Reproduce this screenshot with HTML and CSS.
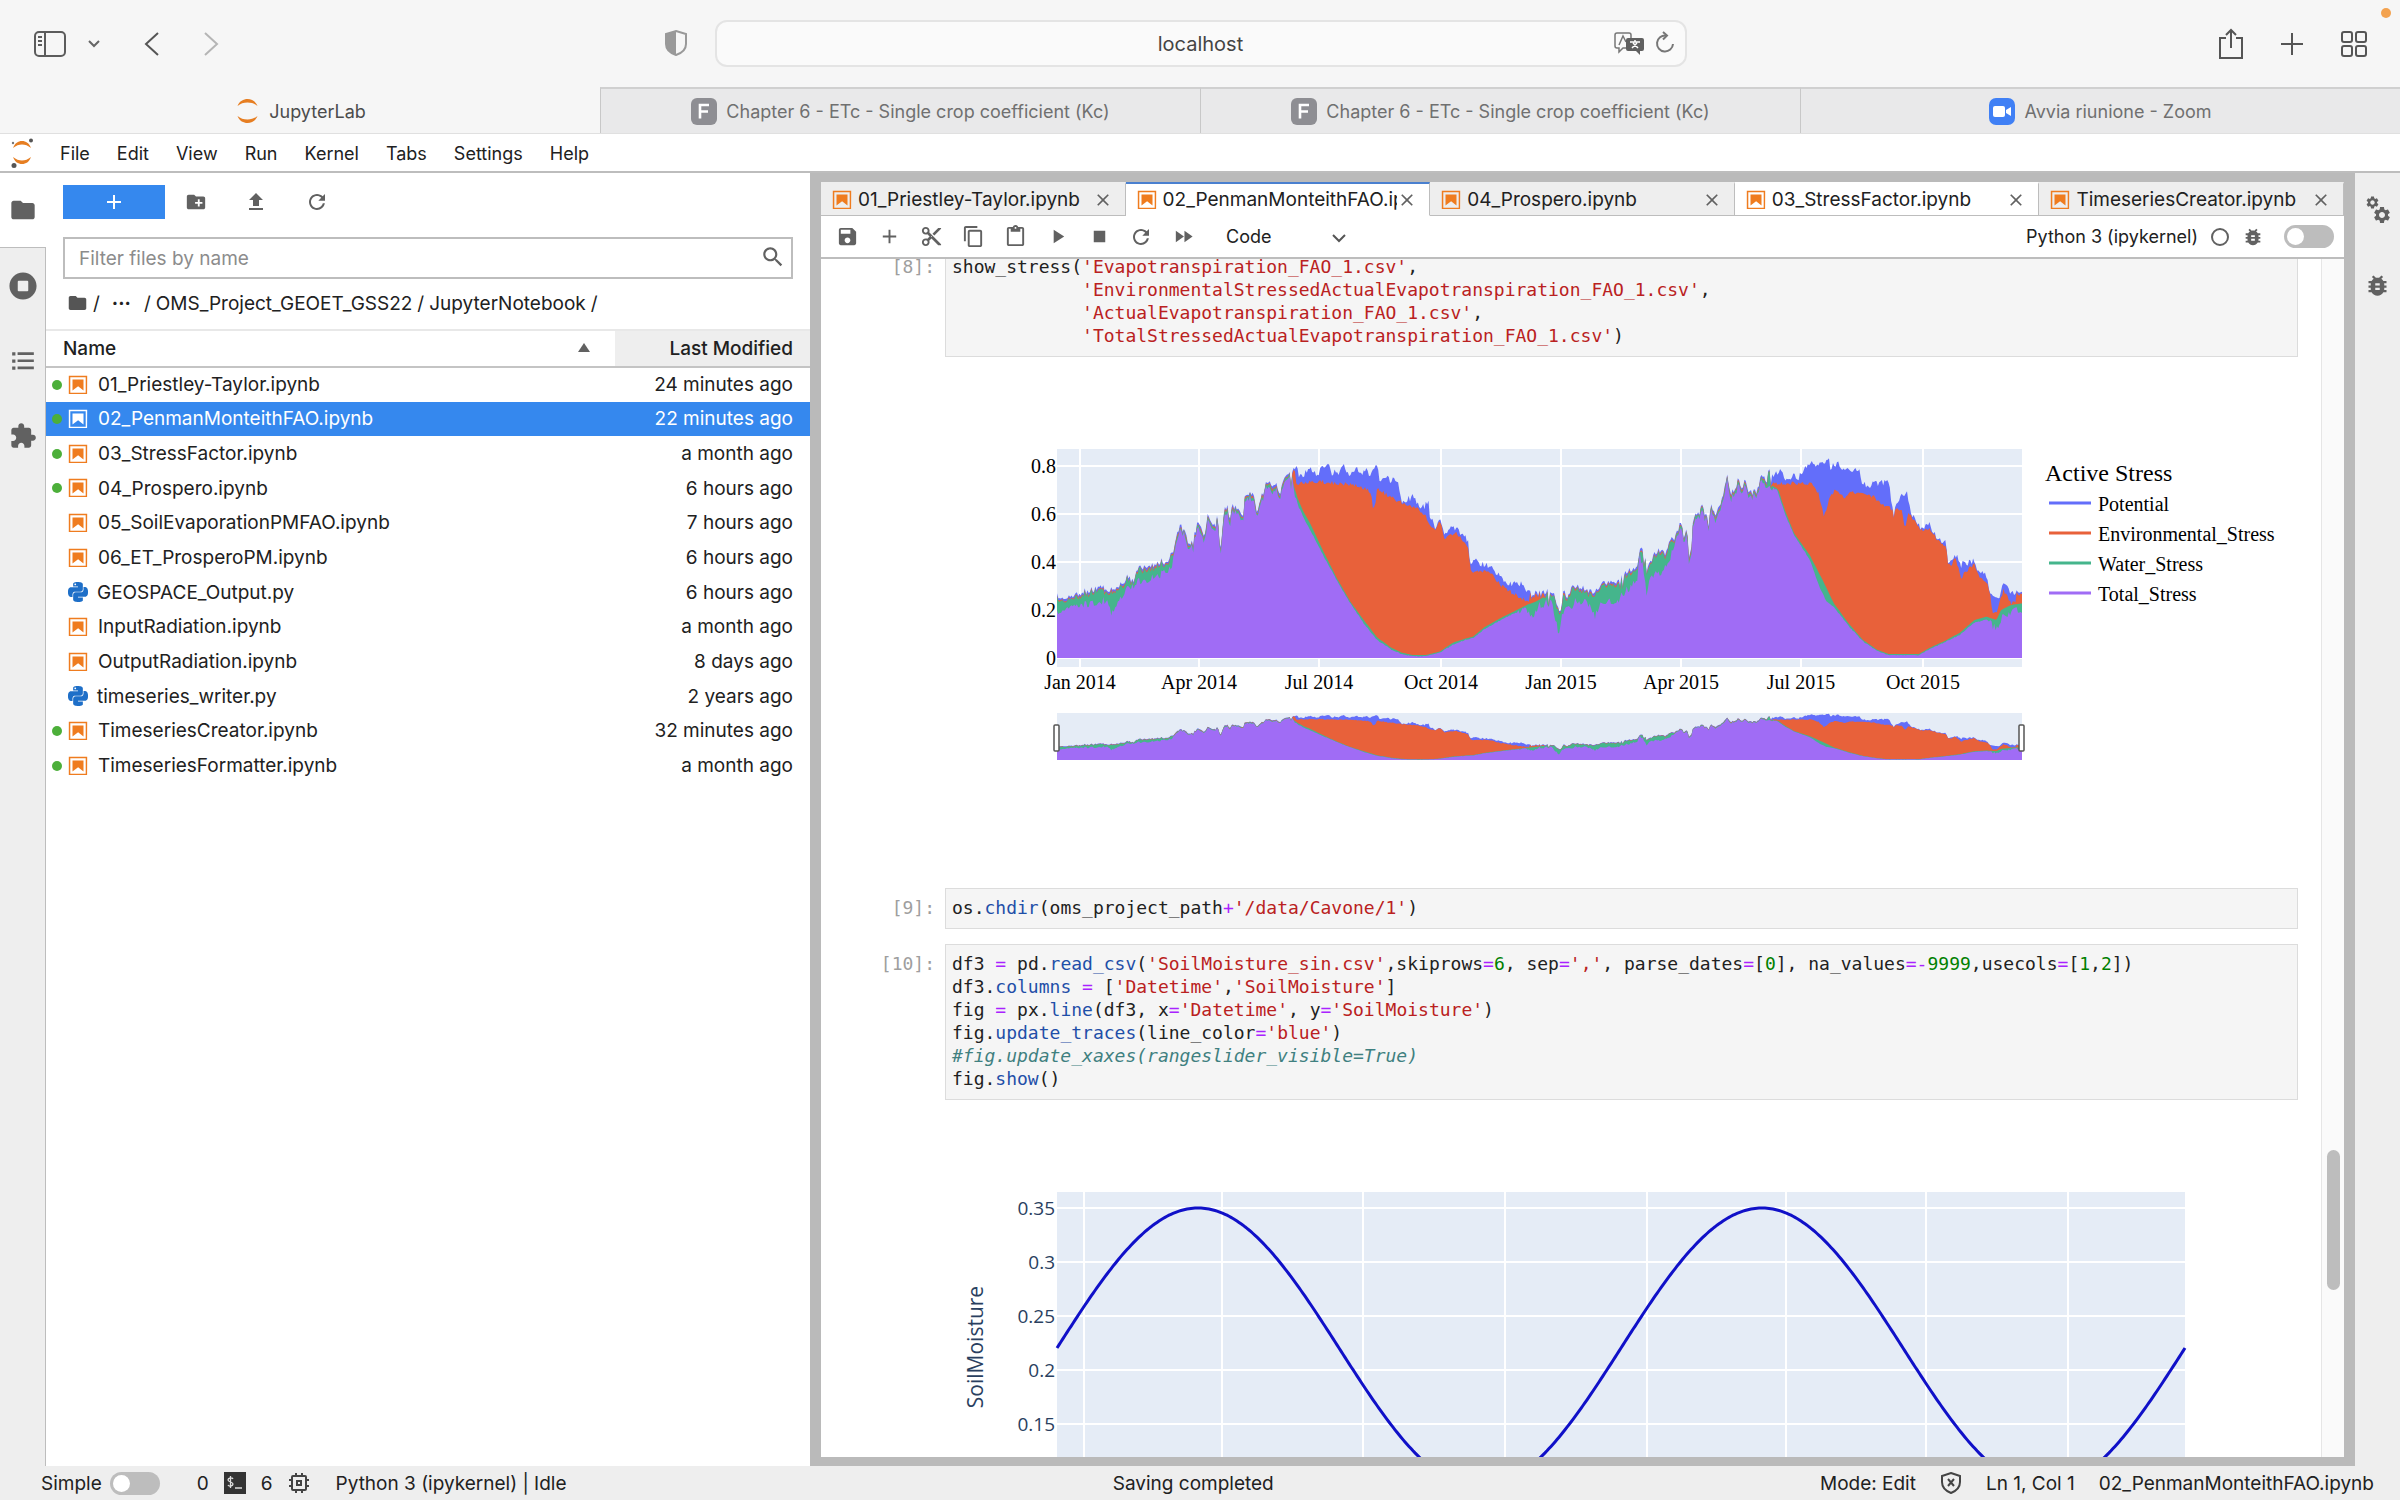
FILE: index.html
```html
<!DOCTYPE html>
<html lang="en">
<head>
  <meta charset="UTF-8">
  <title>JupyterLab</title>
  <meta name="viewport" content="width=device-width, initial-scale=1">
  <link rel="stylesheet" href="styles.css">
</head>
<body>

<!-- Icon set -->
<svg class="sprite" aria-hidden="true">
  <symbol id="i-folder" viewBox="0 0 24 24"><path d="M10 4H4c-1.1 0-1.99.9-1.99 2L2 18c0 1.1.9 2 2 2h16c1.1 0 2-.9 2-2V8c0-1.1-.9-2-2-2h-8l-2-2z"/></symbol>
  <symbol id="i-newfolder" viewBox="0 0 24 24"><path d="M20 6h-8l-2-2H4c-1.11 0-1.99.89-1.99 2L2 18c0 1.11.89 2 2 2h16c1.11 0 2-.89 2-2V8c0-1.11-.89-2-2-2zm-1 8h-3v3h-2v-3h-3v-2h3V9h2v3h3v2z"/></symbol>
  <symbol id="i-upload" viewBox="0 0 24 24"><path d="M9 16h6v-6h4l-7-7-7 7h4zm-4 2h14v2H5z"/></symbol>
  <symbol id="i-refresh" viewBox="0 0 18 18"><path d="M9 13.5c-2.49 0-4.5-2.01-4.5-4.5S6.51 4.5 9 4.5c1.24 0 2.36.52 3.17 1.33L10 8h5V3l-1.76 1.76C12.15 3.68 10.66 3 9 3 5.69 3 3.01 5.69 3.01 9S5.69 15 9 15c2.97 0 5.43-2.16 5.9-5h-1.52c-.46 2-2.24 3.5-4.38 3.5z"/></symbol>
  <symbol id="i-running" viewBox="0 0 512 512"><path d="M256 8C119 8 8 119 8 256s111 248 248 248 248-111 248-248S393 8 256 8zm96 328c0 8.800-7.200 16-16 16H176c-8.800 0-16-7.200-16-16V176c0-8.800 7.200-16 16-16h160c8.800 0 16 7.200 16 16v160z"/></symbol>
  <symbol id="i-toc" viewBox="0 0 24 24"><path d="M2 4h3v3H2zm5 0h15v2.500H7zM2 10.500h3v3H2zm5 0h15V13H7zM2 17h3v3H2zm5 0h15v2.500H7z"/></symbol>
  <symbol id="i-extension" viewBox="0 0 24 24"><path d="M20.5 11H19V7c0-1.1-.9-2-2-2h-4V3.5C13 2.12 11.88 1 10.5 1S8 2.12 8 3.5V5H4c-1.1 0-1.99.9-1.99 2v3.8H3.5c1.49 0 2.7 1.21 2.7 2.7s-1.21 2.7-2.7 2.7H2V20c0 1.1.9 2 2 2h3.800v-1.500c0-1.490 1.210-2.700 2.700-2.700 1.490 0 2.700 1.210 2.700 2.700V22H17c1.1 0 2-.9 2-2v-4h1.500c1.380 0 2.500-1.120 2.500-2.500S21.880 11 20.500 11z"/></symbol>
  <symbol id="i-notebook" viewBox="0 0 22 22"><path d="M18.7 3.3v15.400H3.300V3.300h15.400m1.500-1.500H1.800v18.300h18.300l.1-18.300z"/><path d="M16.500 16.500l-5.400-4.300-5.600 4.300v-11h11z"/></symbol>
  <symbol id="i-search" viewBox="0 0 24 24"><path d="M15.5 14h-.79l-.28-.27C15.41 12.59 16 11.11 16 9.5 16 5.91 13.09 3 9.500 3S3 5.910 3 9.500 5.910 16 9.500 16c1.610 0 3.090-.590 4.230-1.570l.270.280v.790l5 4.990L20.490 19l-4.990-5zm-6 0C7.010 14 5 11.990 5 9.500S7.010 5 9.500 5 14 7.010 14 9.500 11.990 14 9.500 14z"/></symbol>
  <symbol id="i-save" viewBox="0 0 24 24"><path d="M17 3H5c-1.11 0-2 .9-2 2v14c0 1.1.89 2 2 2h14c1.1 0 2-.9 2-2V7l-4-4zm-5 16c-1.66 0-3-1.34-3-3s1.34-3 3-3 3 1.34 3 3-1.34 3-3 3zm3-10H5V5h10v4z"/></symbol>
  <symbol id="i-add" viewBox="0 0 24 24"><path d="M19 13h-6v6h-2v-6H5v-2h6V5h2v6h6v2z"/></symbol>
  <symbol id="i-cut" viewBox="0 0 24 24"><path d="M9.64 7.64c.23-.5.36-1.05.36-1.64 0-2.21-1.79-4-4-4S2 3.79 2 6s1.79 4 4 4c.59 0 1.14-.13 1.64-.36L10 12l-2.36 2.36C7.14 14.13 6.59 14 6 14c-2.21 0-4 1.79-4 4s1.79 4 4 4 4-1.79 4-4c0-.59-.13-1.14-.36-1.64L12 14l7 7h3v-1L9.64 7.64zM6 8c-1.1 0-2-.89-2-2s.9-2 2-2 2 .89 2 2-.9 2-2 2zm0 12c-1.1 0-2-.89-2-2s.9-2 2-2 2 .89 2 2-.9 2-2 2zm6-7.5c-.28 0-.5-.22-.5-.5s.22-.5.5-.5.5.22.5.5-.22.5-.5.5zM19 3l-6 6 2 2 7-7V3z"/></symbol>
  <symbol id="i-copy" viewBox="0 0 24 24"><path d="M16 1H4c-1.1 0-2 .9-2 2v14h2V3h12V1zm3 4H8c-1.1 0-2 .9-2 2v14c0 1.1.9 2 2 2h11c1.1 0 2-.9 2-2V7c0-1.1-.9-2-2-2zm0 16H8V7h11v14z"/></symbol>
  <symbol id="i-paste" viewBox="0 0 24 24"><path d="M19 2h-4.180C14.400.84 13.300 0 12 0c-1.300 0-2.400.84-2.820 2H5c-1.100 0-2 .9-2 2v16c0 1.100.9 2 2 2h14c1.100 0 2-.9 2-2V4c0-1.100-.9-2-2-2zm-7 0c.55 0 1 .45 1 1s-.45 1-1 1-1-.45-1-1 .45-1 1-1zm7 18H5V4h2v3h10V4h2v16z"/></symbol>
  <symbol id="i-run" viewBox="0 0 24 24"><path d="M8 5v14l11-7z"/></symbol>
  <symbol id="i-stop" viewBox="0 0 24 24"><path d="M6 6h12v12H6z"/></symbol>
  <symbol id="i-ff" viewBox="0 0 24 24"><path d="M4 18l8.500-6L4 6v12zm9-12v12l8.500-6L13 6z"/></symbol>
  <symbol id="i-close" viewBox="0 0 24 24"><path d="M19 6.41L17.59 5 12 10.59 6.41 5 5 6.41 10.59 12 5 17.59 6.41 19 12 13.41 17.59 19 19 17.59 13.41 12z"/></symbol>
  <symbol id="i-bug" viewBox="0 0 24 24"><path d="M20 8h-2.81c-.45-.78-1.07-1.45-1.82-1.96L17 4.41 15.59 3l-2.17 2.17C12.96 5.06 12.49 5 12 5c-.49 0-.96.06-1.41.17L8.41 3 7 4.41l1.62 1.63C7.88 6.55 7.26 7.22 6.81 8H4v2h2.09c-.05.33-.09.66-.09 1v1H4v2h2v1c0 .34.04.67.09 1H4v2h2.81c1.04 1.79 2.97 3 5.19 3s4.15-1.21 5.19-3H20v-2h-2.09c.05-.33.09-.66.09-1v-1h2v-2h-2v-1c0-.34-.04-.67-.09-1H20V8zm-6 8h-4v-2h4v2zm0-4h-4v-2h4v2z"/></symbol>
  <symbol id="i-gear" viewBox="0 0 24 24"><path d="M19.14 12.94c.04-.3.06-.61.06-.94 0-.32-.02-.64-.07-.94l2.03-1.58c.18-.14.23-.41.12-.61l-1.92-3.320c-.12-.22-.37-.29-.59-.22l-2.390.960c-.5-.38-1.030-.7-1.620-.94l-.36-2.540c-.04-.24-.24-.41-.48-.41h-3.840c-.24 0-.43.17-.47.41l-.36 2.540c-.59.24-1.130.57-1.620.94l-2.390-.960c-.22-.08-.47 0-.59.22L2.740 8.870c-.12.21-.08.47.12.61l2.030 1.580c-.05.3-.09.63-.09.94s.02.64.07.94l-2.030 1.580c-.18.14-.23.41-.12.61l1.920 3.320c.12.22.37.29.59.22l2.390-.960c.5.38 1.030.7 1.620.94l.36 2.540c.05.24.24.41.48.41h3.840c.24 0 .44-.17.47-.41l.36-2.540c.59-.24 1.130-.56 1.620-.94l2.390.960c.22.08.47 0 .59-.22l1.920-3.320c.12-.22.07-.47-.12-.61l-2.010-1.580zM12 15.600c-1.980 0-3.600-1.620-3.600-3.600s1.620-3.600 3.600-3.600 3.600 1.620 3.600 3.600-1.620 3.600-3.600 3.600z"/></symbol>
  <symbol id="i-python" viewBox="0 0 24 24"><path d="M14.25.18l.9.2.73.26.59.3.45.32.34.34.25.34.16.33.1.3.04.26.02.2-.01.13V8.5l-.05.63-.13.55-.21.46-.26.38-.3.31-.33.25-.35.19-.35.14-.33.1-.3.07-.26.04-.21.02H8.77l-.69.05-.59.14-.5.22-.41.27-.33.32-.27.35-.2.36-.15.37-.1.35-.07.32-.04.27-.02.21v3.06H3.17l-.21-.03-.28-.07-.32-.12-.35-.18-.36-.26-.36-.36-.35-.46-.32-.59-.28-.73-.21-.88-.14-1.05-.05-1.23.06-1.22.16-1.04.24-.87.32-.71.36-.57.4-.44.42-.33.42-.24.4-.16.36-.1.32-.05.24-.01h.16l.06.01h8.16v-.83H6.18l-.01-2.75-.02-.37.05-.34.11-.31.17-.28.25-.26.31-.23.38-.2.44-.18.51-.15.58-.12.64-.1.71-.06.77-.04.84-.02 1.27.05zm-6.3 1.98l-.23.33-.08.41.08.41.23.34.33.22.41.09.41-.09.33-.22.23-.34.08-.41-.08-.41-.23-.33-.33-.22-.41-.09-.41.09z"/><path d="M21.040 6.110l.28.06.32.12.35.18.36.27.36.35.35.47.32.59.28.73.21.88.14 1.04.05 1.23-.06 1.23-.16 1.04-.24.86-.32.71-.36.57-.4.45-.42.33-.42.24-.4.16-.36.09-.32.05-.24.02-.16-.01h-8.22v.82h5.84l.01 2.76.02.36-.05.34-.11.31-.17.29-.25.25-.31.24-.38.2-.44.17-.51.15-.58.13-.64.09-.71.07-.77.04-.84.01-1.27-.04-1.07-.14-.9-.2-.73-.25-.59-.3-.45-.33-.34-.34-.25-.34-.16-.33-.1-.3-.04-.25-.02-.2.01-.13v-5.34l.05-.64.13-.54.21-.46.26-.38.3-.32.33-.24.35-.2.35-.14.33-.1.3-.06.26-.04.21-.02.13-.01h5.84l.69-.05.59-.14.5-.21.41-.28.33-.32.27-.35.2-.36.15-.36.1-.35.07-.32.04-.28.02-.21V6.07h2.09l.14.01z"/></symbol>
  <symbol id="i-jupyter" viewBox="0 0 24 28"><path fill="#e67e22" d="M2 9C4 4 8 2 12 2s8 2 10 7c-3-2.500-6-3.500-10-3.500S5 6.500 2 9zM2 19c2 5 6 7 10 7s8-2 10-7c-3 2.500-6 3.500-10 3.500S5 21.500 2 19z"/></symbol>
  <symbol id="i-f" viewBox="0 0 26 27"><rect width="26" height="27" rx="6" fill="#8e8e93"/><path d="M9 20.500V7h9M9 13.500h8" fill="none" stroke="#fff" stroke-width="2.600"/></symbol>
</svg>

<header class="browser">
  <div class="browser-bar">
    <div class="browser-side">
      <button class="bare" aria-label="Sidebar"><svg width="34" height="28" viewBox="0 0 34 28" fill="none" stroke="#5c5c5c" stroke-width="2"><rect x="2" y="2" width="30" height="24" rx="4"/><path d="M12 2v24M5 7h4M5 11h4M5 15h4"/></svg></button>
      <button class="bare bare-menu" aria-label="Tab groups"><svg width="12" height="9" viewBox="0 0 12 9" fill="none" stroke="#666" stroke-width="2"><path d="M1 2l5 5 5-5"/></svg></button>
      <button class="bare bare-nav" aria-label="Back"><svg width="16" height="26" viewBox="0 0 16 26" fill="none" stroke="#555" stroke-width="2"><path d="M14 2L2 13l12 11"/></svg></button>
      <button class="bare bare-nav" aria-label="Forward"><svg width="16" height="26" viewBox="0 0 16 26" fill="none" stroke="#b5b5b5" stroke-width="2"><path d="M2 2l12 11L2 24"/></svg></button>
    </div>
    <button class="bare bare-shield" aria-label="Privacy report"><svg width="24" height="28" viewBox="0 0 24 28"><path d="M12 2l10 3v10c0 5-4 9-10 11C6 24 2 20 2 15V5z" fill="none" stroke="#999" stroke-width="2"/><path d="M12 2v24C6 24 2 20 2 15V5z" fill="#999"/></svg></button>
    <div class="address">
      <input type="text" value="localhost" aria-label="Address">
      <div class="address-tools">
        <svg width="32" height="24" viewBox="0 0 32 24"><path d="M4 2h12a2 2 0 0 1 2 2v11a2 2 0 0 1-2 2h-6l-4 4v-4H4a2 2 0 0 1-2-2V4a2 2 0 0 1 2-2z" fill="none" stroke="#777" stroke-width="1.500"/><path d="M6 14l4-9 3 6" fill="none" stroke="#777" stroke-width="1.500"/><path d="M15 7h14a2 2 0 0 1 2 2v9a2 2 0 0 1-2 2h-2v4l-4-4h-8a2 2 0 0 1-2-2V9a2 2 0 0 1 2-2z" fill="#606060"/><path d="M17 11h10M22 9v2M19 17l5-5M20 12l5 5" stroke="#fff" stroke-width="1.500"/></svg>
        <svg width="20" height="24" viewBox="0 0 20 24" fill="none" stroke="#777" stroke-width="2"><path d="M11 4.500A8 8 0 1 0 18 13"/><path d="M8 1l4 3.500L8 8.500"/></svg>
      </div>
    </div>
    <div class="browser-actions">
      <button class="bare" aria-label="Share"><svg width="26" height="32" viewBox="0 0 26 32" fill="none" stroke="#555" stroke-width="2"><path d="M8 10H2v20h22V10h-6M13 20V2M8 7l5-5 5 5"/></svg></button>
      <button class="bare" aria-label="New tab"><svg width="26" height="26" viewBox="0 0 26 26" stroke="#555" stroke-width="2"><path d="M13 2v22M2 13h22"/></svg></button>
      <button class="bare" aria-label="Tab overview"><svg width="28" height="28" viewBox="0 0 28 28" fill="none" stroke="#555" stroke-width="2"><rect x="2" y="2" width="10" height="10" rx="2"/><rect x="16" y="2" width="10" height="10" rx="2"/><rect x="2" y="16" width="10" height="10" rx="2"/><rect x="16" y="16" width="10" height="10" rx="2"/></svg></button>
    </div>
    <span class="mic-dot"></span>
  </div>
  <nav class="browser-tabs">
    <a href="#" class="browser-tab current"><svg width="25" height="28"><use href="#i-jupyter"/></svg>JupyterLab</a>
    <a href="#" class="browser-tab"><svg width="26" height="27"><use href="#i-f"/></svg>Chapter 6 - ETc - Single crop coefficient (Kc)</a>
    <a href="#" class="browser-tab"><svg width="26" height="27"><use href="#i-f"/></svg>Chapter 6 - ETc - Single crop coefficient (Kc)</a>
    <a href="#" class="browser-tab"><svg width="26" height="27" viewBox="0 0 26 27"><rect width="26" height="27" rx="7" fill="#4080f5"/><rect x="4" y="8" width="12" height="11" rx="2" fill="#fff"/><path d="M17 12l5-3v9l-5-3z" fill="#fff"/></svg>Avvia riunione - Zoom</a>
  </nav>
</header>

<nav class="menubar">
  <svg class="logo" width="28" height="30" viewBox="0 0 28 30"><path fill="#e67e22" d="M5 10c2-5 5-7 9-7s7 2 9 7c-3-2.500-6-3.500-9-3.500S8 7.500 5 10zM5 19c2 5 5 7 9 7s7-2 9-7c-3 2.500-6 3.500-9 3.500S8 21.500 5 19z"/><circle cx="23" cy="2.500" r="2" fill="#555"/><circle cx="6" cy="27.500" r="2.500" fill="#555"/><circle cx="5" cy="5" r="1.200" fill="#777"/></svg>
  <button>File</button><button>Edit</button><button>View</button><button>Run</button><button>Kernel</button><button>Tabs</button><button>Settings</button><button>Help</button>
</nav>

<main class="workspace">
  <aside class="activity">
    <button class="on" aria-label="File browser"><svg width="28" height="28"><use href="#i-folder"/></svg></button>
    <button aria-label="Running"><svg width="28" height="28"><use href="#i-running"/></svg></button>
    <button aria-label="Table of contents"><svg width="26" height="26"><use href="#i-toc"/></svg></button>
    <button aria-label="Extensions"><svg width="28" height="28"><use href="#i-extension"/></svg></button>
  </aside>

  <section class="files">
    <div class="file-tools">
      <button class="new" aria-label="New launcher"><svg width="24" height="24"><use href="#i-add"/></svg></button>
      <button aria-label="New folder"><svg width="22" height="22"><use href="#i-newfolder"/></svg></button>
      <button aria-label="Upload"><svg width="24" height="24"><use href="#i-upload"/></svg></button>
      <button aria-label="Refresh"><svg width="24" height="24"><use href="#i-refresh"/></svg></button>
    </div>
    <div class="filter">
      <input type="text" placeholder="Filter files by name" aria-label="Filter files by name">
      <svg width="26" height="26"><use href="#i-search"/></svg>
    </div>
    <div class="crumbs">
      <svg width="21" height="22"><use href="#i-folder"/></svg><span>/</span><a href="#" class="dots">···</a><span>/</span><a href="#">OMS_Project_GEOET_GSS22</a><span>/</span><a href="#">JupyterNotebook</a><span>/</span>
    </div>
    <table class="listing">
      <thead>
        <tr><th>Name<svg width="12" height="9" viewBox="0 0 12 9"><path d="M6 0l6 9H0z"/></svg></th><th class="modified">Last Modified</th></tr>
      </thead>
      <tbody>
        <tr class="open"><td><div class="file"><i></i><svg class="nb"><use href="#i-notebook"/></svg>01_Priestley-Taylor.ipynb</div></td><td>24 minutes ago</td></tr>
        <tr class="open selected"><td><div class="file"><i></i><svg class="nb"><use href="#i-notebook"/></svg>02_PenmanMonteithFAO.ipynb</div></td><td>22 minutes ago</td></tr>
        <tr class="open"><td><div class="file"><i></i><svg class="nb"><use href="#i-notebook"/></svg>03_StressFactor.ipynb</div></td><td>a month ago</td></tr>
        <tr class="open"><td><div class="file"><i></i><svg class="nb"><use href="#i-notebook"/></svg>04_Prospero.ipynb</div></td><td>6 hours ago</td></tr>
        <tr><td><div class="file"><i></i><svg class="nb"><use href="#i-notebook"/></svg>05_SoilEvaporationPMFAO.ipynb</div></td><td>7 hours ago</td></tr>
        <tr><td><div class="file"><i></i><svg class="nb"><use href="#i-notebook"/></svg>06_ET_ProsperoPM.ipynb</div></td><td>6 hours ago</td></tr>
        <tr><td><div class="file"><i></i><svg class="py"><use href="#i-python"/></svg>GEOSPACE_Output.py</div></td><td>6 hours ago</td></tr>
        <tr><td><div class="file"><i></i><svg class="nb"><use href="#i-notebook"/></svg>InputRadiation.ipynb</div></td><td>a month ago</td></tr>
        <tr><td><div class="file"><i></i><svg class="nb"><use href="#i-notebook"/></svg>OutputRadiation.ipynb</div></td><td>8 days ago</td></tr>
        <tr><td><div class="file"><i></i><svg class="py"><use href="#i-python"/></svg>timeseries_writer.py</div></td><td>2 years ago</td></tr>
        <tr class="open"><td><div class="file"><i></i><svg class="nb"><use href="#i-notebook"/></svg>TimeseriesCreator.ipynb</div></td><td>32 minutes ago</td></tr>
        <tr class="open"><td><div class="file"><i></i><svg class="nb"><use href="#i-notebook"/></svg>TimeseriesFormatter.ipynb</div></td><td>a month ago</td></tr>
      </tbody>
    </table>
  </section>

  <section class="dock">
    <div class="doc-tabs">
      <div class="doc-tab"><svg class="nb"><use href="#i-notebook"/></svg><span>01_Priestley-Taylor.ipynb</span><button aria-label="Close"><svg width="20" height="20"><use href="#i-close"/></svg></button></div>
      <div class="doc-tab active"><svg class="nb"><use href="#i-notebook"/></svg><span>02_PenmanMonteithFAO.ipynb</span><button aria-label="Close"><svg width="20" height="20"><use href="#i-close"/></svg></button></div>
      <div class="doc-tab"><svg class="nb"><use href="#i-notebook"/></svg><span>04_Prospero.ipynb</span><button aria-label="Close"><svg width="20" height="20"><use href="#i-close"/></svg></button></div>
      <div class="doc-tab hovered"><svg class="nb"><use href="#i-notebook"/></svg><span>03_StressFactor.ipynb</span><button aria-label="Close"><svg width="20" height="20"><use href="#i-close"/></svg></button></div>
      <div class="doc-tab"><svg class="nb"><use href="#i-notebook"/></svg><span>TimeseriesCreator.ipynb</span><button aria-label="Close"><svg width="20" height="20"><use href="#i-close"/></svg></button></div>
    </div>
    <div class="nb-toolbar">
      <button aria-label="Save"><svg width="23" height="23"><use href="#i-save"/></svg></button>
      <button aria-label="Insert cell"><svg width="23" height="23"><use href="#i-add"/></svg></button>
      <button aria-label="Cut"><svg width="23" height="23"><use href="#i-cut"/></svg></button>
      <button aria-label="Copy"><svg width="23" height="23"><use href="#i-copy"/></svg></button>
      <button aria-label="Paste"><svg width="23" height="23"><use href="#i-paste"/></svg></button>
      <button aria-label="Run"><svg width="23" height="23"><use href="#i-run"/></svg></button>
      <button aria-label="Stop"><svg width="23" height="23"><use href="#i-stop"/></svg></button>
      <button aria-label="Restart"><svg width="24" height="24"><use href="#i-refresh"/></svg></button>
      <button aria-label="Restart and run all"><svg width="23" height="23"><use href="#i-ff"/></svg></button>
      <div class="cell-type">
        <select aria-label="Cell type"><option>Code</option><option>Markdown</option><option>Raw</option></select>
        <svg width="14" height="9" viewBox="0 0 14 9" fill="none" stroke="#555" stroke-width="2"><path d="M1 1l6 6 6-6"/></svg>
      </div>
      <div class="kernel">
        <span>Python 3 (ipykernel)</span>
        <svg width="20" height="20" viewBox="0 0 20 20"><circle cx="10" cy="10" r="8" fill="none" stroke="#616161" stroke-width="2"/></svg>
        <svg width="22" height="22"><use href="#i-bug"/></svg>
        <input type="checkbox" class="switch" aria-label="Enable debugger">
      </div>
    </div>

    <div class="notebook">
      <div class="cells">
        <div class="cell first">
          <div class="prompt">[8]:</div>
          <div class="code">
            <pre>show_stress(<b class="s">'Evapotranspiration_FAO_1.csv'</b>,</pre>
            <pre>            <b class="s">'EnvironmentalStressedActualEvapotranspiration_FAO_1.csv'</b>,</pre>
            <pre>            <b class="s">'ActualEvapotranspiration_FAO_1.csv'</b>,</pre>
            <pre>            <b class="s">'TotalStressedActualEvapotranspiration_FAO_1.csv'</b>)</pre>
          </div>
        </div>
        <div class="output"><svg id="stress" class="plot stress" width="1352" height="516"></svg></div>

        <div class="cell">
          <div class="prompt">[9]:</div>
          <div class="code">
            <pre>os.<b class="f">chdir</b>(oms_project_path<b class="o">+</b><b class="s">'/data/Cavone/1'</b>)</pre>
          </div>
        </div>

        <div class="cell last">
          <div class="prompt">[10]:</div>
          <div class="code">
            <pre>df3 <b class="o">=</b> pd.<b class="f">read_csv</b>(<b class="s">'SoilMoisture_sin.csv'</b>,skiprows<b class="o">=</b><b class="n">6</b>, sep<b class="o">=</b><b class="s">','</b>, parse_dates<b class="o">=</b>[<b class="n">0</b>], na_values<b class="o">=-</b><b class="n">9999</b>,usecols<b class="o">=</b>[<b class="n">1</b>,<b class="n">2</b>])</pre>
            <pre>df3.<b class="f">columns</b> <b class="o">=</b> [<b class="s">'Datetime'</b>,<b class="s">'SoilMoisture'</b>]</pre>
            <pre>fig <b class="o">=</b> px.<b class="f">line</b>(df3, x<b class="o">=</b><b class="s">'Datetime'</b>, y<b class="o">=</b><b class="s">'SoilMoisture'</b>)</pre>
            <pre>fig.<b class="f">update_traces</b>(line_color<b class="o">=</b><b class="s">'blue'</b>)</pre>
            <pre><b class="c">#fig.update_xaxes(rangeslider_visible=True)</b></pre>
            <pre>fig.<b class="f">show</b>()</pre>
          </div>
        </div>
        <div class="output"><svg id="moisture" class="plot moisture" width="1352" height="420"></svg></div>
      </div>
      <div class="scroll"><div class="thumb"></div></div>
    </div>
  </section>

  <aside class="inspector">
    <button aria-label="Property inspector"><svg width="26" height="38" viewBox="0 0 26 38"><use href="#i-gear" x="0" y="3" width="15" height="15"/><use href="#i-gear" x="7" y="13" width="20" height="20"/></svg></button>
    <button aria-label="Debugger"><svg width="27" height="27"><use href="#i-bug"/></svg></button>
  </aside>
</main>

<footer class="status">
  <div class="status-left">
    <label for="simple">Simple</label><input type="checkbox" id="simple" class="switch">
    <div class="sessions">
      <span>0</span>
      <svg width="22" height="22" viewBox="0 0 22 22"><rect width="22" height="22" fill="#333"/><path d="M9 7c-1-2-5-1-5 1s5 2 5 4-4 3-5 1M6.500 4v12M11 16h7" fill="none" stroke="#ddd" stroke-width="1.300"/></svg>
      <span>6</span>
      <svg width="22" height="22" viewBox="0 0 22 22" fill="none" stroke="#444" stroke-width="2"><rect x="4" y="4" width="14" height="14" rx="1"/><rect x="9" y="9" width="4" height="4"/><path d="M8 1v3M14 1v3M8 18v3M14 18v3M1 8h3M1 14h3M18 8h3M18 14h3"/></svg>
    </div>
    <span>Python 3 (ipykernel) | Idle</span>
  </div>
  <div class="status-mid">Saving completed</div>
  <div class="status-right">
    <span>Mode: Edit</span>
    <svg width="22" height="22" viewBox="0 0 22 22" fill="none" stroke="#444" stroke-width="2"><path d="M11 1l9 3v6c0 5-4 9-9 11-5-2-9-6-9-11V4zM8 7l6 7M14 7l-6 7"/></svg>
    <span>Ln 1, Col 1</span>
    <span>02_PenmanMonteithFAO.ipynb</span>
  </div>
</footer>

<script src="charts.js"></script>
</body>
</html>
```

FILE: styles.css
```css
* {
  box-sizing: border-box;
}

body {
  margin: 0;
  height: 100vh;
  display: flex;
  flex-direction: column;
  overflow: hidden;
  background: #fff;
  color: #212121;
  font-family: Inter, "Liberation Sans", sans-serif;
  font-size: 18px;
}

button, input, select {
  font: inherit;
  color: inherit;
}

button {
  border: 0;
  padding: 0;
  background: none;
  cursor: pointer;
}

a {
  color: inherit;
  text-decoration: none;
}

svg {
  display: block;
  flex: none;
}

.sprite {
  position: absolute;
  width: 0;
  height: 0;
}

/* Browser window */
.browser {
  background: #f6f6f6;
}

.browser-bar {
  position: relative;
  display: grid;
  grid-template-columns: 1fr 972px 1fr;
  align-items: center;
  height: 87px;
  padding: 0 32px 0 33px;
}

.browser-side {
  display: flex;
  align-items: center;
}

.bare {
  display: flex;
}

.bare-menu {
  margin: 0 44px 0 21px;
}

.bare-nav + .bare-nav {
  margin-left: 43px;
}

.bare-shield {
  position: absolute;
  left: 664px;
  top: 29px;
}

.address {
  position: relative;
}

.address input {
  display: block;
  width: 100%;
  height: 47px;
  border: 2px solid #e4e4e4;
  border-radius: 12px;
  background: #fafafa;
  color: #444;
  text-align: center;
  font-size: 20px;
  outline: none;
}

.address-tools {
  position: absolute;
  right: 12px;
  top: 11px;
  display: flex;
  gap: 10px;
}

.browser-actions {
  display: flex;
  align-items: center;
  justify-content: flex-end;
  gap: 35px;
}

.mic-dot {
  position: absolute;
  right: 9px;
  top: 8px;
  width: 10px;
  height: 10px;
  border-radius: 50%;
  background: #f3a24f;
}

.browser-tabs {
  display: flex;
  height: 47px;
  border-bottom: 1px solid #e0e0e0;
}

.browser-tab {
  flex: 1;
  display: flex;
  align-items: center;
  justify-content: center;
  gap: 9px;
  background: #e9e9ea;
  border-top: 2px solid #d0d0d0;
  border-left: 1px solid #c8c8c8;
  color: #707070;
}

.browser-tab.current {
  background: none;
  border-color: transparent;
  color: #4c4c4c;
}

/* Menu bar */
.menubar {
  display: flex;
  align-items: center;
  height: 39px;
  padding-left: 8px;
  border-bottom: 2px solid #bdbdbd;
}

.menubar .logo {
  margin-right: 10px;
}

.menubar button {
  padding: 1px 13px 0 14px;
}

/* Work area */
.workspace {
  flex: 1;
  min-height: 0;
  display: flex;
  background: #eee;
}

.activity {
  width: 46px;
  border-right: 1px solid #bdbdbd;
  fill: #616161;
}

.activity button {
  display: flex;
  align-items: center;
  justify-content: center;
  width: 45px;
  height: 75px;
}

.activity .on {
  width: 46px;
  background: #fff;
  border-bottom: 1px solid #bdbdbd;
}

.files {
  width: 764px;
  background: #fff;
  display: flex;
  flex-direction: column;
  font-size: 19px;
}

.file-tools {
  display: flex;
  align-items: center;
  gap: 37px;
  padding: 12px 17px 0;
  fill: #616161;
}

.file-tools .new {
  display: flex;
  align-items: center;
  justify-content: center;
  width: 102px;
  height: 34px;
  margin-right: -17px;
  background: #3588ee;
  fill: #fff;
}

.filter {
  position: relative;
  margin: 18px 17px 0;
}

.filter input {
  display: block;
  width: 100%;
  height: 42px;
  padding: 0 14px;
  border: 2px solid #bdbdbd;
  outline: none;
}

.filter input::placeholder {
  color: #8c8c8c;
}

.filter svg {
  position: absolute;
  right: 7px;
  top: 7px;
  fill: #616161;
}

.crumbs {
  display: flex;
  align-items: center;
  gap: 5px;
  height: 50px;
  padding: 0 0 2px 21px;
  fill: #555;
}

.crumbs .dots {
  padding: 0 8px 0 7px;
  font-weight: 700;
}

.listing {
  width: 100%;
  border-collapse: collapse;
  text-align: right;
}

.listing th {
  height: 37px;
  padding: 0 17px;
  border-top: 2px solid #e8e8e8;
  border-bottom: 2px solid #c4c4c4;
  font-weight: 500;
  text-align: left;
}

.listing th svg {
  float: right;
  margin: 6px 8px 0 0;
  fill: #616161;
}

.listing .modified {
  width: 195px;
  background: #eee;
  text-align: right;
}

.listing tbody {
  height: 416px;
}

.listing tbody tr {
  height: 34px;
}

.listing td {
  padding: 0 17px 0 0;
  white-space: nowrap;
}

.file {
  display: flex;
  align-items: center;
  padding-left: 6px;
}

.file i {
  width: 10px;
  height: 10px;
  margin-right: 5px;
  border-radius: 50%;
}

.open .file i {
  background: #4caf3a;
}

.nb {
  width: 22px;
  height: 22px;
  fill: #ef7c1f;
}

.py {
  width: 20px;
  height: 20px;
  margin: 0 1px;
  fill: #1e6fc8;
}

.file svg {
  margin-right: 9px;
}

.selected {
  background: #3588ee;
  color: #fff;
}

.selected .nb {
  fill: #fff;
}

/* Documents */
.dock {
  flex: 1;
  min-width: 0;
  display: flex;
  flex-direction: column;
  padding: 9px 11px;
  background: #bababa;
}

.doc-tabs {
  display: flex;
  font-size: 19px;
}

.doc-tab {
  flex: 1;
  min-width: 0;
  display: flex;
  align-items: center;
  height: 34px;
  padding: 0 12px 0 10px;
  background: #eee;
  border-right: 1px solid #bdbdbd;
  border-bottom: 1px solid #bdbdbd;
  border-top: 2px solid #eee;
}

.doc-tab span {
  flex: 1;
  min-width: 0;
  margin-left: 5px;
  overflow: hidden;
  white-space: nowrap;
}

.doc-tab button {
  fill: #616161;
}

.doc-tab.active {
  background: #fff;
  border-bottom-color: #fff;
  border-top-color: #4a80cf;
}

.doc-tab.hovered {
  background: #fff;
  border-top-color: #fff;
}

.nb-toolbar {
  display: flex;
  align-items: center;
  height: 43px;
  padding: 0 10px 0 5px;
  background: #fff;
  border-bottom: 2px solid #bdbdbd;
  fill: #616161;
}

.nb-toolbar > button {
  display: flex;
  justify-content: center;
  width: 42px;
}

.cell-type {
  position: relative;
  width: 138px;
  margin-left: 18px;
}

.cell-type select {
  width: 100%;
  border: 0;
  padding: 0 4px;
  background: none;
  appearance: none;
  outline: none;
}

.cell-type svg {
  position: absolute;
  right: 14px;
  top: 8px;
}

.kernel {
  display: flex;
  align-items: center;
  gap: 12px;
  margin-left: auto;
}

.switch {
  appearance: none;
  width: 50px;
  height: 23px;
  margin: 0 0 0 8px;
  border-radius: 12px;
  background: #bdbdbd;
}

.switch::before {
  content: "";
  display: block;
  width: 17px;
  height: 17px;
  margin: 3px;
  border-radius: 50%;
  background: #fff;
}

.notebook {
  flex: 1;
  min-height: 0;
  display: flex;
  overflow: hidden;
  background: #fff;
}

.cells {
  flex: 1;
  min-width: 0;
  padding-right: 23px;
}

.cell {
  display: flex;
  margin-bottom: 15px;
  font-family: "DejaVu Sans Mono", "Liberation Mono", monospace;
  font-size: 18px;
  line-height: 23px;
}

/* scrolled partly under the toolbar */
.first {
  margin: -12px 0 0;
}

.last {
  margin-bottom: 0;
}

.prompt {
  width: 124px;
  padding: 8px 10px 0 0;
  color: #9e9e9e;
  text-align: right;
}

.code {
  flex: 1;
  min-width: 0;
  padding: 7px 6px 9px;
  border: 1px solid #dcdcdc;
  background: #f5f5f5;
}

.code pre {
  margin: 0;
  font: inherit;
}

.code b {
  font-weight: 400;
}

.code .s { color: #ba2121; }
.code .f { color: #1f4fa8; }
.code .o { color: #aa22ff; }
.code .n { color: #008000; }
.code .c { color: #408080; font-style: italic; }

.output {
  padding-left: 124px;
}

.stress {
  margin-bottom: 15px;
  font-family: "Liberation Serif", serif;
  font-size: 20px;
}

.stress text {
  fill: #000;
}

.stress .title {
  font-size: 24px;
}

.moisture {
  font-family: "Open Sans", sans-serif;
  font-size: 19px;
}

.moisture text {
  fill: #2a3f5f;
}

.moisture .title {
  font-size: 21px;
}

.scroll {
  width: 23px;
  padding: 891px 4px 0 5px;
  background: #fafafa;
  border-left: 1px solid #e6e6e6;
}

.thumb {
  width: 13px;
  height: 140px;
  border-radius: 7px;
  background: #bdbdbd;
}

.inspector {
  width: 45px;
  fill: #616161;
}

.inspector button {
  display: flex;
  align-items: center;
  justify-content: center;
  width: 45px;
  height: 75px;
}

/* Status bar */
.status {
  display: flex;
  align-items: center;
  justify-content: space-between;
  height: 34px;
  padding: 0 26px 0 41px;
  background: #eee;
  font-size: 19px;
}

.status-left,
.status-right,
.sessions {
  display: flex;
  align-items: center;
}

.sessions {
  gap: 15px;
  margin: 0 26px 0 37px;
}

.status-right {
  justify-content: flex-end;
  gap: 24px;
}
```

FILE: charts.js
```js
const NS = "http://www.w3.org/2000/svg";

function add(parent, tag, attrs, text) {
  const el = document.createElementNS(NS, tag);
  for (const key in attrs) el.setAttribute(key, attrs[key]);
  if (text) el.textContent = text;
  parent.appendChild(el);
  return el;
}

// small repeatable random generator
let seed = 7;
function rnd() {
  seed = (seed * 16807) % 2147483647;
  return seed / 2147483647;
}

function year1(text) {
  return text.split(" ").map(p => {
    const [x, y] = p.split(":").map(Number);
    return [(x - 173) / 2.24, y / 3 + 63];
  });
}
function year2(text) {
  return text.split(" ").map(p => {
    const [x, y] = p.split(":").map(Number);
    return [583 + x / 2.063, y / 3 + 63];
  });
}

const potential = [[
  ...year1("173:530 200:527 240:512 283:502 290:510 310:500 330:472 345:480 357:438 380:440 400:425 415:425 430:405 433:395 442:330 452:318 462:335 470:385 480:345 490:300 496:315 500:350 512:280 520:310 529:325 533:275 536:370 541:380 545:280 553:262 575:262 587:280 595:225 608:207 615:225 620:275 630:235 638:205 645:182 655:190 665:200 672:222 683:180 697:153 710:145 716:172 730:160 738:145 748:165 762:155 775:133 783:135 788:160 805:158 817:140 823:160 845:150 858:163 866:145 872:170 880:143 893:142 897:195 910:170 920:180 929:175 938:200 945:242 970:232 985:255 998:258 1005:240 1009:295 1020:320 1033:296 1040:345 1050:330 1065:322 1080:340 1090:355 1096:372 1097:430 1115:425 1130:435 1145:440 1160:460 1170:483 1190:488 1215:495 1235:522 1275:515 1287:530 1294:560 1298:580 1303:555 1308:515 1315:530 1330:498 1360:502 1375:522 1390:495 1410:482 1430:485 1450:455 1470:440 1474:440"),
  ...year2("0:390 8:388 15:440 25:410 35:392 55:390 62:350 70:370 78:330 83:292 90:350 97:325 102:440 108:310 120:270 128:255 138:295 146:260 158:270 165:255 172:215 180:170 188:215 196:215 202:178 210:205 217:182 225:215 240:215 248:180 262:155 275:162 290:152 300:178 315:168 325:175 335:160 347:128 360:135 372:122 390:122 392:140 410:132 425:150 440:155 452:152 458:190 470:200 485:188 514:190 518:240 523:285 530:250 540:230 548:218 552:225 560:285 570:300 580:325 590:320 597:310 605:340 615:350 631:370 637:440 643:425 650:400 662:435 675:430 690:420 697:460 705:455 715:465 720:500 730:540 740:530 750:492 765:518 789:520")
]];
const env = [
  year1("706:190 760:185 800:190 850:197 876:215 881:265 886:250 890:205 920:232 945:248 985:270 1000:290 1012:325 1033:305 1040:355 1065:335 1085:365 1096:385 1098:455 1140:450 1170:500 1200:525 1231:548"),
  year2("270:190 355:190 368:220 380:290 392:225 405:210 420:235 435:215 465:222 480:228 500:255 512:262 525:272 540:268 547:325 553:275 570:312 580:330 597:325 615:355 633:382 640:445 650:410 662:472 690:430 700:470 720:495 727:575 737:575 750:510 765:550 775:545")
];
const water = [
  year1("703:195 712:235 725:275 740:310 770:395 800:475 830:545 860:600 890:652 920:682 945:698 970:705 1000:705 1030:695 1060:668 1090:655 1105:650 1130:622 1170:592 1200:572 1225:555 1245:545 1265:530"),
  year2("270:195 285:208 300:275 318:340 350:405 375:475 400:550 430:610 460:660 490:690 512:702 575:702 600:682 630:662 660:638 690:600 715:590 735:600 745:570 765:555 789:550")
];
const total = [
  year1("173:578 200:565 240:552 285:540 296:580 303:570 310:545 330:510 360:482 400:468 430:445 434:405 444:345"),
  year1("703:205 712:250 725:292 740:330 770:408 800:482 830:550 860:610 890:660 920:687 945:702 970:708 1000:708 1030:698 1060:674 1090:658 1105:655 1130:628 1170:598 1200:578 1225:570 1238:585 1255:555 1280:545 1290:600 1298:650 1303:600 1310:560 1325:570 1335:540 1360:545 1378:590 1390:545 1430:540 1460:495 1474:480"),
  year2("0:420 6:430 14:530 22:470 40:460 55:440 65:400 80:330"),
  year2("262:200 280:208 290:240 300:285 318:345 350:418 370:500 385:545 400:560 430:618 460:664 490:693 512:705 575:705 600:685 630:666 660:644 690:608 715:598 735:628 748:585 775:570 789:575")
];

function at(segments, x) {
  for (const s of segments) {
    if (x < s[0][0] || x > s[s.length - 1][0]) continue;
    for (let i = 1; i < s.length; i++) {
      if (x <= s[i][0]) {
        const t = (x - s[i - 1][0]) / (s[i][0] - s[i - 1][0] || 1);
        return s[i - 1][1] + t * (s[i][1] - s[i - 1][1]);
      }
    }
  }
  return null;
}

const WIDTH = 965, BASE = 301, DAYS = 730;
const series = { potential: [], env: [], water: [], total: [] };
for (let d = 0; d <= DAYS; d++) {
  const x = d / DAYS * WIDTH;
  let p = at(potential, Math.min(x, WIDTH - 1)) + (rnd() - 0.5) * 7;
  let e = at(env, x), w = at(water, x), t = at(total, x);
  // cloudy days in spring
  if (e === null && x > 120 && x < 800 && rnd() < 0.1) p += rnd() * 14;
  e = e === null ? p + 1 + rnd() * 2 : Math.max(p + 1, e + (rnd() - 0.5) * 4);
  w = w === null ? e + rnd() * 2 : Math.max(e, w);
  t = t === null ? w + 1 + rnd() * 3 : Math.max(w + 1, t + (rnd() - 0.5) * (w - p < 25 ? 8 : 1));
  series.potential.push([x, p]);
  series.env.push([x, e]);
  series.water.push([x, w]);
  series.total.push([x, t]);
}
const colors = { potential: "#636efa", env: "#e8613a", water: "#45b58c", total: "#a06cf5" };

function areas(parent, transform) {
  const g = add(parent, "g", { transform });
  for (const name in series) {
    const line = series[name].map(p => p[0].toFixed(1) + " " + p[1].toFixed(1)).join("L");
    add(g, "path", { d: `M0 ${BASE}L${line}L${WIDTH} ${BASE}Z`, fill: colors[name] });
  }
}

function drawStress() {
  const svg = document.getElementById("stress");
  add(svg, "rect", { x: 112, y: 92, width: WIDTH, height: 218, fill: "#e5ecf6" });
  const months = [["Jan 2014", 135], ["Apr 2014", 254], ["Jul 2014", 374], ["Oct 2014", 496],
    ["Jan 2015", 616], ["Apr 2015", 736], ["Jul 2015", 856], ["Oct 2015", 978]];
  for (const [name, x] of months) {
    add(svg, "path", { d: `M${x} 92V310`, stroke: "#fff", "stroke-width": 2 });
    add(svg, "text", { x, y: 332, "text-anchor": "middle" }, name);
  }
  ["0", "0.2", "0.4", "0.6", "0.8"].forEach((name, i) => {
    const y = BASE - i * 48;
    add(svg, "path", { d: `M112 ${y}H1077`, stroke: "#fff", "stroke-width": 2 });
    add(svg, "text", { x: 111, y: y + 7, "text-anchor": "end" }, name);
  });
  areas(svg, "translate(112 0)");

  // range slider
  add(svg, "rect", { x: 112, y: 356, width: WIDTH, height: 47, fill: "#e5ecf6" });
  areas(svg, "translate(112 333.200) scale(1 .232)");
  for (const x of [109, 1074]) {
    add(svg, "rect", { x, y: 368, width: 5, height: 26, rx: 1, fill: "#fff", stroke: "#555", "stroke-width": 1.5 });
  }

  // legend
  add(svg, "text", { x: 1100, y: 124, class: "title" }, "Active Stress");
  [["Potential", "potential"], ["Environmental_Stress", "env"], ["Water_Stress", "water"], ["Total_Stress", "total"]].forEach(([name, key], i) => {
    const y = 146 + i * 30;
    add(svg, "path", { d: `M1104 ${y}H1146`, stroke: colors[key], "stroke-width": 3 });
    add(svg, "text", { x: 1153, y: y + 8 }, name);
  });
}

function drawMoisture() {
  const svg = document.getElementById("moisture");
  add(svg, "rect", { x: 112, y: 92, width: 1128, height: 328, fill: "#e5ecf6" });
  for (const x of [139, 277, 418, 560, 702, 841, 981, 1123]) {
    add(svg, "path", { d: `M${x} 92V420`, stroke: "#fff", "stroke-width": 2 });
  }
  ["0.35", "0.3", "0.25", "0.2", "0.15"].forEach((name, i) => {
    const y = 108 + i * 54;
    add(svg, "path", { d: `M112 ${y}H1240`, stroke: "#fff", "stroke-width": 2 });
    add(svg, "text", { x: 110, y: y + 7, "text-anchor": "end" }, name);
  });
  const points = [];
  for (let x = 0; x <= 1128; x += 2) {
    points.push((112 + x) + "," + (248 - 140 * Math.sin(2 * Math.PI * x / 564)).toFixed(1));
  }
  add(svg, "polyline", { points: points.join(" "), fill: "none", stroke: "#1010c8", "stroke-width": 3 });
  add(svg, "text", { x: 0, y: 0, transform: "translate(38 247) rotate(-90)", "text-anchor": "middle", class: "title" }, "SoilMoisture");
}

drawStress();
drawMoisture();
```
